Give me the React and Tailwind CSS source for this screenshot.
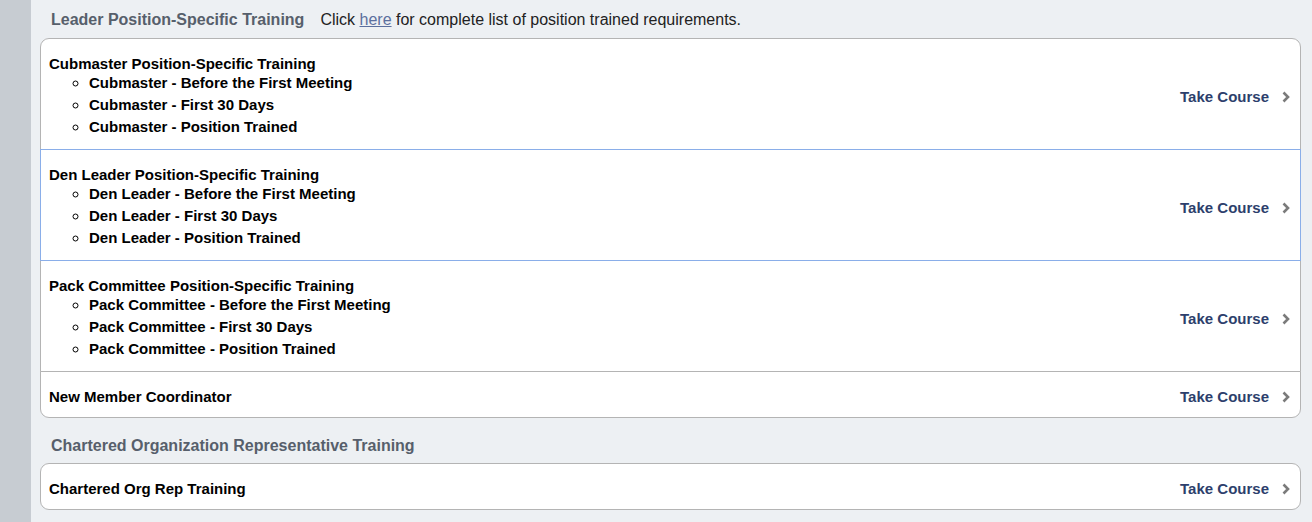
import React from 'react'

const leaderCourses = [
  {
    title: 'Cubmaster Position-Specific Training',
    items: ['Cubmaster - Before the First Meeting', 'Cubmaster - First 30 Days', 'Cubmaster - Position Trained'],
  },
  {
    title: 'Den Leader Position-Specific Training',
    items: ['Den Leader - Before the First Meeting', 'Den Leader - First 30 Days', 'Den Leader - Position Trained'],
    active: true,
  },
  {
    title: 'Pack Committee Position-Specific Training',
    items: ['Pack Committee - Before the First Meeting', 'Pack Committee - First 30 Days', 'Pack Committee - Position Trained'],
  },
  { title: 'New Member Coordinator', items: [] },
]

const corCourses = [{ title: 'Chartered Org Rep Training', items: [] }]

const Chevron = () => (
  <svg width="10" height="14" viewBox="0 0 10 14" className="ml-[12px]">
    <polyline points="2.5,2.5 7,7 2.5,11.5" fill="none" stroke="#7b7b7b" strokeWidth="2.6" />
  </svg>
)

const CourseRow = ({ course, first, last }) => {
  const hasItems = course.items.length > 0
  const rounded = `${first ? 'rounded-t-[9px]' : ''} ${last ? 'rounded-b-[9px]' : ''} ${
    hasItems || last ? 'pb-[11px]' : 'pb-[10px]'
  }`
  return (
    <div
      className={`flex items-center pl-[8px] pr-[9px] pt-[16px] -mt-px ${rounded} ${
        course.active ? 'border border-[#8aaee9] relative z-10' : 'border border-[#b4b4b4]'
      } bg-white`}
    >
      <div className="flex-1">
        <div className={`text-[15px] font-bold text-black ${hasItems ? 'leading-[17px]' : 'leading-[18px]'}`}>
          {course.title}
        </div>
        {hasItems && (
          <ul className="list-[circle] pl-[40px]">
            {course.items.map((item) => (
              <li key={item} className="text-[15px] leading-[22px] font-bold text-black">
                {item}
              </li>
            ))}
          </ul>
        )}
      </div>
      <button className="flex items-center h-[18px] text-[15px] leading-[18px] font-bold text-[#2d3f6c]">
        Take Course
        <Chevron />
      </button>
    </div>
  )
}

const CourseCard = ({ courses }) => (
  <div className="pt-px">
    {courses.map((c, i) => (
      <CourseRow key={c.title} course={c} first={i === 0} last={i === courses.length - 1} />
    ))}
  </div>
)

export default function App() {
  return (
    <div className="flex w-[1312px] h-[522px] overflow-hidden" style={{ fontFamily: '"Liberation Sans", Arial, sans-serif' }}>
      <div className="w-[31px] bg-[#c7ccd2] shrink-0" />
      <div className="flex-1 bg-[#edf0f3] pl-[9px] pr-[11px]">
        <div className="flex items-baseline h-[38px] pt-[8px] pl-[11px]">
          <h2 className="text-[16px] font-bold text-[#575f6b]">Leader Position-Specific Training</h2>
          <p className="ml-[16px] text-[16px] text-[#222]">
            Click{' '}
            <a href="#" className="text-[#5b6f9e] underline">
              here
            </a>{' '}
            for complete list of position trained requirements.
          </p>
        </div>
        <CourseCard courses={leaderCourses} />
        <div className="h-[45px] flex items-center pl-[11px] pt-[11px]">
          <h2 className="text-[16px] font-bold text-[#575f6b]">Chartered Organization Representative Training</h2>
        </div>
        <CourseCard courses={corCourses} />
      </div>
    </div>
  )
}
